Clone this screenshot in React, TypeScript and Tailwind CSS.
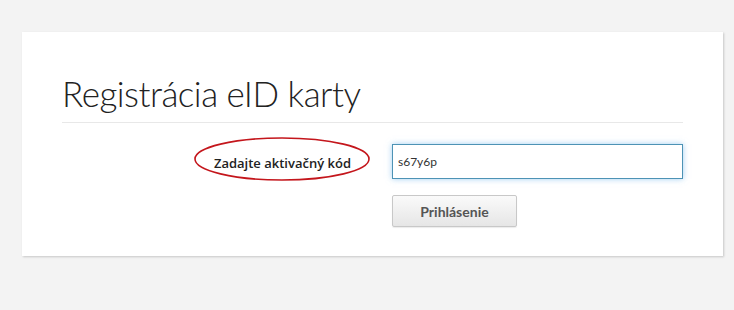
export default function App() {
  return (
    <div className="w-[734px] h-[310px] bg-[#f3f3f3] pt-[32px] pl-[22px] font-['Open_Sans',sans-serif]">
      <div className="w-[701px] h-[224px] bg-white shadow-[1px_1px_2px_rgba(0,0,0,0.18)] px-[40px] pt-[40px]">
        <h1 className="text-[35px] leading-[43px] font-light font-['Lato',sans-serif] tracking-[-0.5px] text-[#222] pb-[7px] border-b border-[#e8e8e8] w-[621px]">
          Registrácia eID karty
        </h1>

        <div className="flex mt-[21px]">
          <div className="w-[290px] h-[35px] flex items-center justify-end">
            <div className="relative">
              <span className="text-[13px] font-semibold text-[#222]">Zadajte aktivačný kód</span>
              {/* červená elipsa okolo popisu */}
              <svg className="absolute left-[-21px] top-[-14px]" width="178" height="46" viewBox="0 0 178 46">
                <ellipse cx="89" cy="23" rx="87" ry="21" fill="none" stroke="#c4161c" strokeWidth="1.6" />
              </svg>
            </div>
          </div>

          <div className="ml-[41px] flex flex-col gap-[16px]">
            <input
              readOnly
              value="s67y6p"
              className="w-[291px] h-[35px] px-[5px] text-[12px] text-[#333] font-['Lato',sans-serif] border border-[#4d93b5] shadow-[0_0_6px_rgba(102,175,233,0.6)] outline-none"
            />
            <button className="w-[125px] h-[32px] rounded-[2px] border border-[#c8c8c8] bg-gradient-to-b from-[#fafafa] to-[#e6e6e6] shadow-[0_1px_1px_rgba(0,0,0,0.08)] text-[14px] font-bold text-[#555] font-['Lato',sans-serif]">
              Prihlásenie
            </button>
          </div>
        </div>
      </div>
    </div>
  )
}
